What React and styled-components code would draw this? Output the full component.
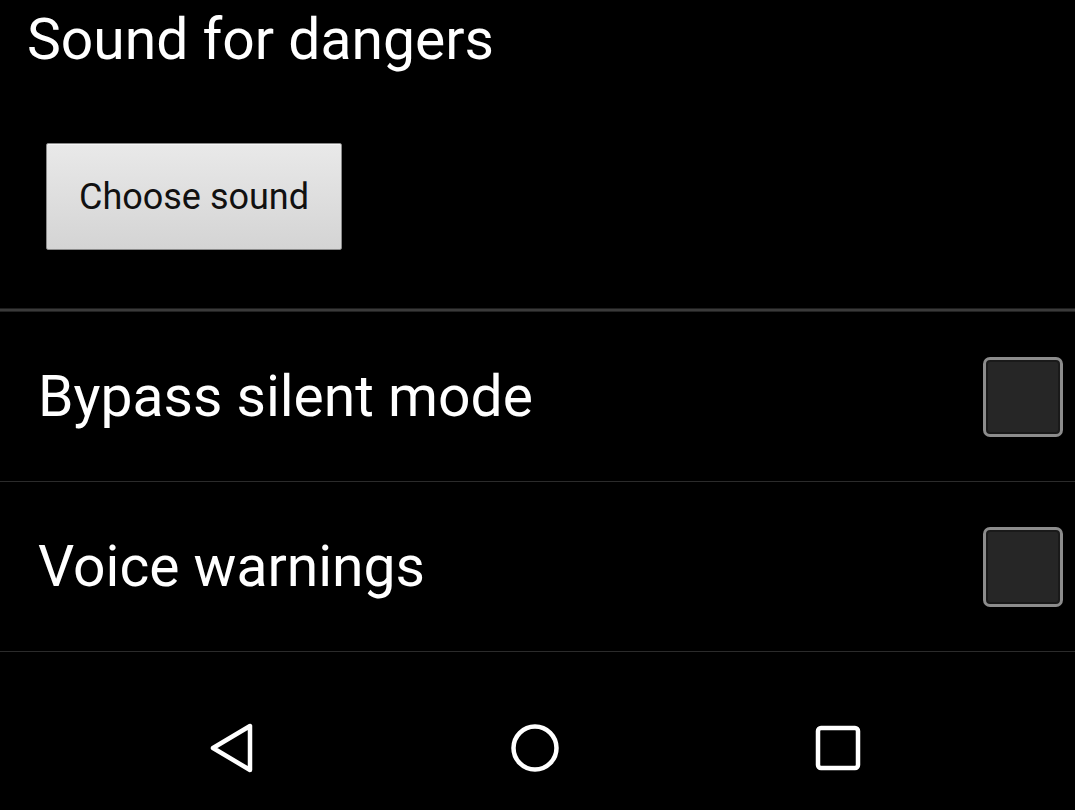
import styled, { createGlobalStyle } from "styled-components";

const Global = createGlobalStyle`
  html, body {
    margin: 0;
    padding: 0;
    background: #000;
  }
  body {
    font-family: Roboto, "Noto Sans", sans-serif;
    color: #fff;
  }
`;

const Screen = styled.div`
  width: 1075px;
  height: 810px;
  background: #000;
  display: flex;
  flex-direction: column;
  overflow: hidden;
`;

const Section = styled.div`
  height: 308px;
  display: flex;
  flex-direction: column;
  box-sizing: border-box;
`;

const Title = styled.div`
  font-size: 57px;
  line-height: 80px;
  padding-left: 27px;
`;

const ButtonRow = styled.div`
  padding: 63px 0 0 46px;
`;

const SoundButton = styled.button`
  width: 296px;
  height: 107px;
  box-sizing: border-box;
  border: 1px solid #8a8a8a;
  border-radius: 2px;
  background: linear-gradient(#e9e9e9, #d4d4d4);
  box-shadow: inset 0 1px 0 #f6f6f6;
  font-family: Roboto, "Noto Sans", sans-serif;
  font-size: 36px;
  color: #111;
  padding: 0;
`;

const Divider = styled.div`
  height: 2px;
  border-top: 1px solid #1e1e1e;
  background: #3a3a3a;
  border-bottom: 1px solid #222;
`;

const Row = styled.div`
  height: 169px;
  display: flex;
  align-items: center;
  justify-content: space-between;
  padding: 0 12px 0 38px;
  border-bottom: 1px solid #2b2b2b;
`;

const Label = styled.span`
  font-size: 57px;
`;

const Check = styled.div`
  width: 80px;
  height: 80px;
  box-sizing: border-box;
  border: 3px solid #8c8c8c;
  border-radius: 7px;
  background: #262626;
  box-shadow: inset 0 0 0 2px #1a1a1a;
`;

const NavBar = styled.div`
  flex: 1;
  display: flex;
  align-items: flex-start;
  justify-content: space-between;
  padding: 71px 213px 0 208px;
`;

const NavIcon = styled.svg`
  width: 48px;
  height: 50px;
  display: block;
`;

export default function App() {
  return (
    <Screen>
      <Global />
      <Section>
        <Title>Sound for dangers</Title>
        <ButtonRow>
          <SoundButton>Choose sound</SoundButton>
        </ButtonRow>
      </Section>
      <Divider />
      <Row>
        <Label>Bypass silent mode</Label>
        <Check />
      </Row>
      <Row>
        <Label>Voice warnings</Label>
        <Check />
      </Row>
      <NavBar>
        <NavIcon viewBox="0 0 48 50">
          <path
            d="M42 3 L42 47 L5 25 Z"
            fill="none"
            stroke="#fff"
            strokeWidth="4.5"
            strokeLinejoin="round"
          />
        </NavIcon>
        <NavIcon viewBox="0 0 48 50">
          <circle cx="24" cy="25" r="21.5" fill="none" stroke="#fff" strokeWidth="4.5" />
        </NavIcon>
        <NavIcon viewBox="0 0 48 50">
          <rect x="4" y="5" width="40" height="40" rx="3" fill="none" stroke="#fff" strokeWidth="4.5" />
        </NavIcon>
      </NavBar>
    </Screen>
  );
}
